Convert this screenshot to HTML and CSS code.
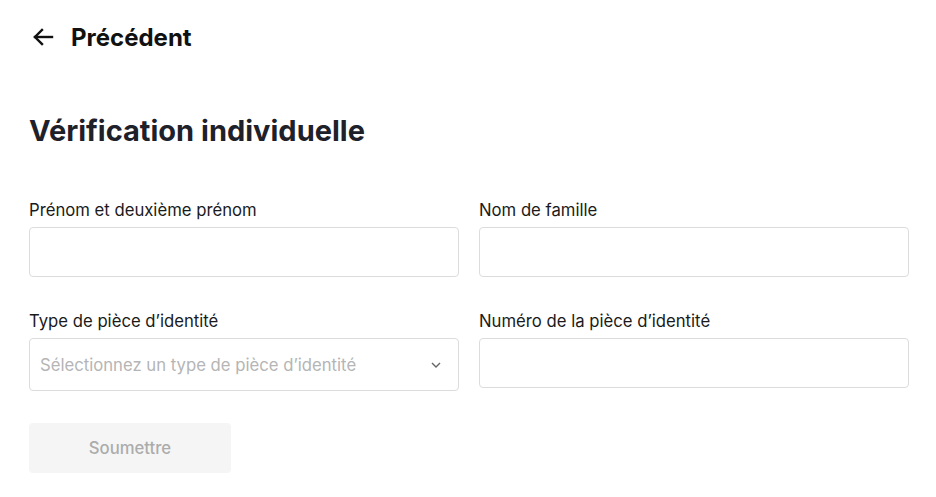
FILE: index.html
```html
<!DOCTYPE html>
<html lang="fr">
<head>
<meta charset="utf-8">
<link rel="stylesheet" href="styles.css">
</head>
<body>
<div class="page">
  <a class="back" href="#">
    <svg class="back-icon" width="22" height="22" viewBox="0 0 22 22" fill="none" stroke="#111" stroke-width="2.4" stroke-linecap="square">
      <path d="M3 11 H20"/>
      <path d="M10 4 L3 11 L10 18" stroke-linejoin="miter"/>
    </svg>
    <span>Précédent</span>
  </a>
  <h1 class="title">Vérification individuelle</h1>
  <form class="form">
    <div class="field">
      <label class="label">Prénom et deuxième prénom</label>
      <div class="input"></div>
    </div>
    <div class="field">
      <label class="label">Nom de famille</label>
      <div class="input"></div>
    </div>
    <div class="field">
      <label class="label">Type de pièce d’identité</label>
      <div class="input select">
        <span class="placeholder">Sélectionnez un type de pièce d’identité</span>
        <svg width="12" height="12" viewBox="0 0 12 12" fill="none" stroke="#666" stroke-width="1.4"><path d="M2 4 L6 8 L10 4"/></svg>
      </div>
    </div>
    <div class="field">
      <label class="label">Numéro de la pièce d’identité</label>
      <div class="input"></div>
    </div>
  </form>
  <button class="submit" type="button">Soumettre</button>
</div>
</body>
</html>
```
FILE: styles.css
```css
html, body { margin: 0; padding: 0; background: #fff; }
body { font-family: Inter, "Noto Sans", sans-serif; color: #121212; }
.page { padding: 23px 28px 0 29px; width: 880px; }
.back { display: flex; align-items: center; gap: 17px; text-decoration: none; color: #111; font-weight: 700; font-size: 24px; height: 28px; margin-left: 3px; }
.back-icon { display: block; }
.title { margin: 62px 0 0; font-size: 29px; font-weight: 700; color: #1e2129; line-height: 36px; }
.form { display: grid; grid-template-columns: 430px 430px; column-gap: 20px; row-gap: 33px; margin-top: 50px; }
.field { display: flex; flex-direction: column; }
.label { font-size: 16.7px; line-height: 22px; margin-bottom: 6px; color: #1a1a1a; }
.input { height: 48px; border: 1px solid #dcdcdc; border-radius: 4px; box-sizing: content-box; }
.select { display: flex; align-items: center; justify-content: space-between; padding: 0 16px 0 10px; height: 51px; }
.placeholder { font-size: 16.7px; color: #b5b5b5; }
.submit { margin-top: 32px; width: 202px; height: 50px; border: none; border-radius: 4px; background: #f5f5f5; color: #acacac; font-family: inherit; font-size: 16.7px; font-weight: 500; }
```
